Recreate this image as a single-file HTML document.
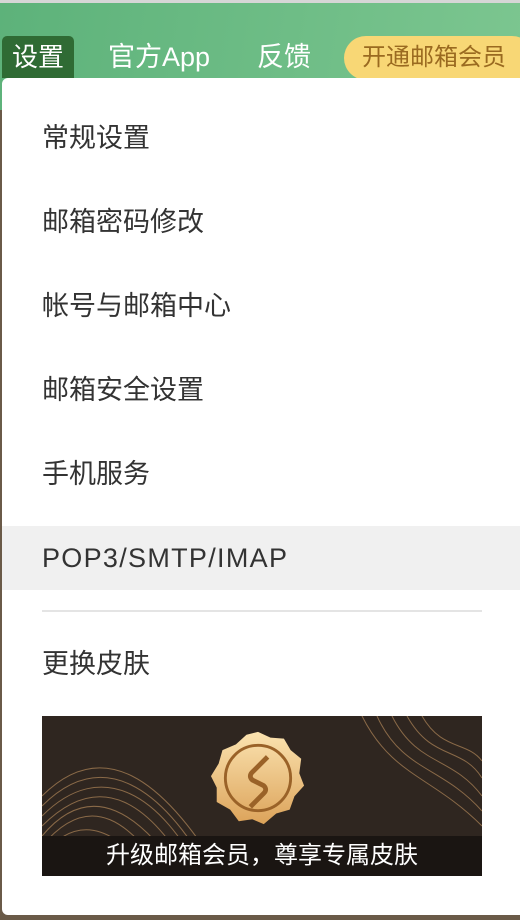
<!DOCTYPE html>
<html><head><meta charset="utf-8"><style>
*{margin:0;padding:0;box-sizing:border-box}
body{width:520px;height:920px;overflow:hidden;position:relative;background:#6a5a48;font-family:"Liberation Sans","Noto Sans CJK SC",sans-serif}
.top{position:absolute;left:0;top:0;width:520px;height:110px;background:linear-gradient(100deg,#5db27a 0%,#7cc690 100%);border-top:3px solid #d6d6d6}
.nav{position:absolute;top:36px;height:42px;color:#fff;font-size:27px;line-height:42px}
.set{left:2px;width:72px;background:#2f6b34;border-radius:5px 5px 0 0;text-align:center;font-size:26px}
.pill{position:absolute;left:344px;top:36px;width:190px;height:44px;border-radius:22px;background:#f8d775;color:#9a6a20;font-size:24px;line-height:44px;padding-left:18px}
.menu{position:absolute;left:2px;top:78px;width:530px;height:837px;background:#fff;border-radius:6px}
.it{position:absolute;left:0;width:530px;height:64px;line-height:64px;padding-left:40px;font-size:27px;color:#333}
.hl{background:#f0f0f0;letter-spacing:1.3px}
.div{position:absolute;left:40px;top:532px;width:440px;height:2px;background:#e4e4e4}
.ban{position:absolute;left:40px;top:638px;width:440px;height:160px;background:#2f2620;overflow:hidden}
.cap{position:absolute;left:0;bottom:0;width:440px;height:40px;background:#1a1512;color:#fff;font-size:24px;line-height:40px;text-align:center}
</style></head><body>
<div class="top"></div>
<div class="nav set">设置</div>
<div class="nav" style="left:108px">官方App</div>
<div class="nav" style="left:257px">反馈</div>
<div class="pill">开通邮箱会员</div>
<div class="menu">
<div class="it" style="top:28px">常规设置</div>
<div class="it" style="top:112px">邮箱密码修改</div>
<div class="it" style="top:196px">帐号与邮箱中心</div>
<div class="it" style="top:280px">邮箱安全设置</div>
<div class="it" style="top:364px">手机服务</div>
<div class="it hl" style="top:448px">POP3/SMTP/IMAP</div>
<div class="div"></div>
<div class="it" style="top:554px">更换皮肤</div>
<div class="ban">
<svg width="440" height="160" style="position:absolute;left:0;top:0" fill="none" stroke="#8a6a48" stroke-width="1">
<path d="M0 80 C60 20 120 60 180 160"/><path d="M0 90 C60 30 120 70 170 160"/><path d="M0 100 C60 40 120 80 160 160"/><path d="M0 110 C60 50 110 90 150 160"/><path d="M0 120 C50 60 100 100 140 160"/><path d="M0 130 C50 70 90 110 125 160"/><path d="M0 140 C40 90 80 120 110 160"/>
<path d="M320 0 C350 60 390 60 440 110"/><path d="M335 0 C360 55 400 50 440 95"/><path d="M350 0 C375 50 410 40 440 80"/><path d="M365 0 C390 45 420 30 440 62"/><path d="M380 0 C400 35 425 25 440 45"/>
</svg>
<svg width="96" height="96" viewBox="0 0 100 100" style="position:absolute;left:168px;top:14px">
<defs><linearGradient id="g" x1="0" y1="0" x2="0" y2="1"><stop offset="0" stop-color="#fbe3b0"/><stop offset="1" stop-color="#dca35a"/></linearGradient></defs>
<path d="M50 2 L63 8 L77 9 L84 21 L95 30 L93 45 L98 58 L88 69 L83 83 L69 87 L56 98 L44 93 L30 95 L21 83 L7 75 L7 60 L1 48 L9 35 L13 21 L27 15 L38 5 Z" fill="url(#g)"/>
<circle cx="50" cy="50" r="34" fill="none" stroke="#9a6228" stroke-width="3"/>
<path d="M60 28 L44 44 Q40 48 44 52 L56 58 Q60 62 56 66 L42 80" fill="none" stroke="#9a6228" stroke-width="5" stroke-linejoin="round"/>
</svg>
<div class="cap">升级邮箱会员，尊享专属皮肤</div>
</div>
</div>
</body></html>
